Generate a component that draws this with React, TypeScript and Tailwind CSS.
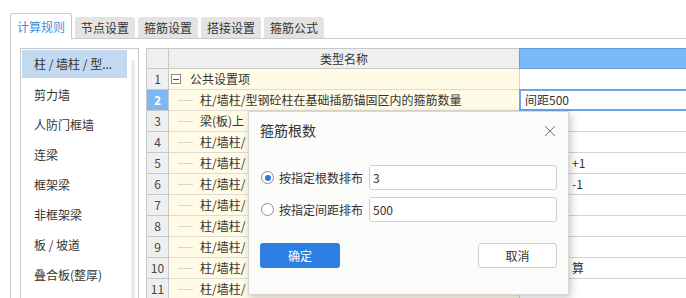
import React from "react";

const listItems = [
  "柱 / 墙柱 / 型...",
  "剪力墙",
  "人防门框墙",
  "连梁",
  "框架梁",
  "非框架梁",
  "板 / 坡道",
  "叠合板(整厚)",
];

const rows: { name: string; value: string; root?: boolean }[] = [
  { name: "公共设置项", value: "", root: true },
  { name: "柱/墙柱/型钢砼柱在基础插筋锚固区内的箍筋数量", value: "间距500" },
  { name: "梁(板)上", value: "" },
  { name: "柱/墙柱/", value: "" },
  { name: "柱/墙柱/", value: "+1" },
  { name: "柱/墙柱/", value: "-1" },
  { name: "柱/墙柱/", value: "" },
  { name: "柱/墙柱/", value: "" },
  { name: "柱/墙柱/", value: "" },
  { name: "柱/墙柱/", value: "算" },
  { name: "柱/墙柱/", value: "" },
];

const tabs = ["节点设置", "箍筋设置", "搭接设置", "箍筋公式"];

export default function App() {
  return (
    <div className="relative w-[686px] h-[298px] overflow-hidden bg-white text-[12px] text-[#333] font-['Noto_Sans_CJK_SC','Microsoft_YaHei',sans-serif]">
      {/* Tabs */}
      <div className="ml-[10px] h-[39px] flex items-end border-b border-[#c9c9c9]">
        <div className="w-[62px] h-[26px] -mb-px bg-white border border-b-0 border-[#c9c9c9] rounded-t-[3px] flex items-center justify-center text-[#3d8fe0]">
          计算规则
        </div>
        {tabs.map((t) => (
          <div
            key={t}
            className="ml-[3px] w-[60px] h-[21px] bg-[#e3e3e3] rounded-t-[3px] flex items-center justify-center text-[#333]"
          >
            {t}
          </div>
        ))}
      </div>

      {/* Body */}
      <div className="ml-[10px] h-[259px] border-l border-[#c9c9c9] flex pl-[9px] pt-[9px]">
        {/* List */}
        <div className="w-[119px] h-[270px] shrink-0 border border-[#c9c9c9] flex overflow-hidden">
          <div className="w-[106px] pl-px pt-px">
            {listItems.map((it, i) =>
              i === 0 ? (
                <div
                  key={it}
                  className="h-[28px] mb-[2px] w-[105px] bg-[#c2d9f1] flex items-center pl-[12px] whitespace-nowrap"
                >
                  {it}
                </div>
              ) : (
                <div key={it} className="h-[30px] flex items-center pl-[12px] whitespace-nowrap">
                  {it}
                </div>
              )
            )}
          </div>
          <div className="ml-[4px] mt-[11px] w-[4px] h-[300px] rounded-full bg-[#ebebeb]" />
        </div>

        {/* Table */}
        <div className="ml-[7px] w-[560px] shrink-0 border-l border-t border-[#c8c8c8]">
          <div className="flex h-[20px]">
            <div className="w-[22px] border-r border-b border-[#c8c8c8] bg-[#efefef]" />
            <div className="w-[350px] border-b border-[#c8c8c8] bg-[#efefef] flex items-center justify-center">
              类型名称
            </div>
            <div className="flex-1 bg-[#7db9f6] border-l border-t border-b border-[#5d9fe6] -mt-px" />
          </div>
          {rows.map((r, i) => {
            const n = i + 1;
            const sel = n === 2;
            return (
              <div key={n} className="flex h-[21px]">
                <div
                  className={
                    sel
                      ? "w-[22px] border-r border-b border-[#c8c8c8] bg-[#7db8f4] text-white font-bold flex items-center justify-center"
                      : "w-[22px] border-r border-b border-[#c8c8c8] bg-[#efefef] text-[#444] flex items-center justify-center"
                  }
                >
                  {n}
                </div>
                <div className="w-[350px] border-b border-[#dcdcd4] bg-[#fffbe6] flex items-center whitespace-nowrap overflow-hidden">
                  {r.root ? (
                    <>
                      <div className="ml-[2px] w-[10px] h-[10px] border border-[#8a8a8a] bg-white flex items-center justify-center">
                        <div className="w-[6px] h-px bg-[#555]" />
                      </div>
                      <span className="ml-[9px]">{r.name}</span>
                    </>
                  ) : (
                    <>
                      <div className="ml-[9px] w-[15px] h-px bg-[#d6d6d0]" />
                      <span className="ml-[7px]">{r.name}</span>
                    </>
                  )}
                </div>
                {sel ? (
                  <div className="flex-1 border-2 border-[#6ba6e6] bg-white flex items-center pl-[4px] -mt-px h-[22px]">
                    {r.value}
                  </div>
                ) : (
                  <div className="flex-1 border-l border-b border-[#d2d2d2] bg-white flex items-center pl-[52px] whitespace-nowrap">
                    {r.value}
                  </div>
                )}
              </div>
            );
          })}
        </div>
      </div>

      {/* Dialog */}
      <div className="absolute left-[248px] top-[111px] w-[321px] h-[184px] bg-[#fbfbf9] border border-[#d8d8d8] shadow-[2px_3px_8px_rgba(0,0,0,0.22)] px-[11px]">
        <div className="h-[37px] flex items-center justify-between">
          <span className="text-[14px] text-[#333]">箍筋根数</span>
          <svg width="12" height="12" viewBox="0 0 12 12" className="mr-[1px]">
            <path d="M1 1 L11 11 M11 1 L1 11" stroke="#777" strokeWidth="1" fill="none" />
          </svg>
        </div>
        <div className="mt-[16px] flex items-center h-[25px]">
          <div className="w-[19px] flex">
            <div className="ml-[1px] w-[13px] h-[13px] rounded-full border border-[#8a8a8a] bg-white flex items-center justify-center">
              <div className="w-[6px] h-[6px] rounded-full bg-[#2b7be0]" />
            </div>
          </div>
          <span className="w-[90px] whitespace-nowrap">按指定根数排布</span>
          <div className="flex-1 h-[25px] border border-[#cfcfcf] rounded-[3px] bg-white flex items-center pl-[3px]">
            3
          </div>
        </div>
        <div className="mt-[7px] flex items-center h-[25px]">
          <div className="w-[19px] flex">
            <div className="ml-[1px] w-[13px] h-[13px] rounded-full border border-[#8a8a8a] bg-white" />
          </div>
          <span className="w-[90px] whitespace-nowrap">按指定间距排布</span>
          <div className="flex-1 h-[25px] border border-[#cfcfcf] rounded-[3px] bg-white flex items-center pl-[3px]">
            500
          </div>
        </div>
        <div className="mt-[21px] flex justify-between">
          <div className="w-[80px] h-[25px] rounded-[3px] bg-[#2d7fe3] text-white flex items-center justify-center">
            确定
          </div>
          <div className="w-[79px] h-[25px] rounded-[3px] border border-[#cfcfcf] bg-white flex items-center justify-center">
            取消
          </div>
        </div>
      </div>
    </div>
  );
}
